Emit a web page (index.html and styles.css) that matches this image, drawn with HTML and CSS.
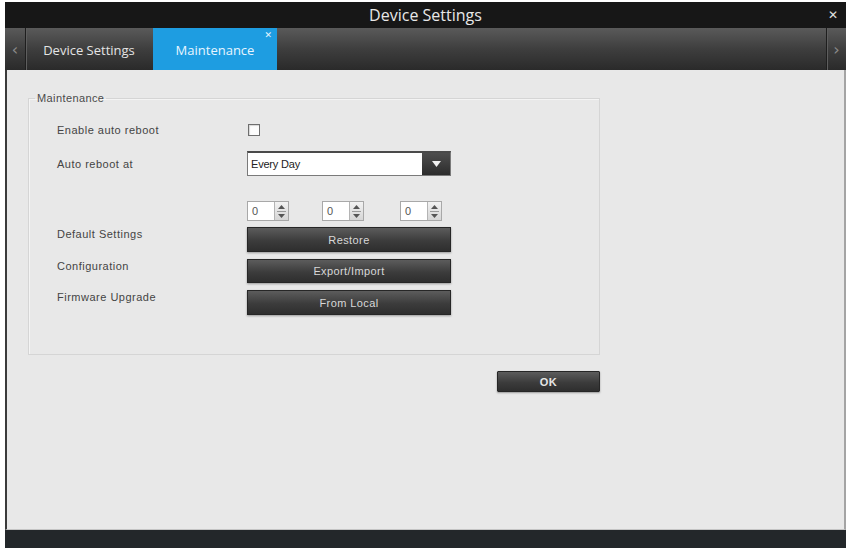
FILE: index.html
```html
<!DOCTYPE html>
<html>
<head>
<meta charset="utf-8">
<title>Device Settings</title>
<link rel="stylesheet" href="styles.css">
</head>
<body>
<div class="window">
  <div class="titlebar">
    <span class="title">Device Settings</span>
    <span class="close">✕</span>
  </div>
  <div class="tabbar">
    <div class="nav nav-left">‹</div>
    <div class="tab">Device Settings</div>
    <div class="tab active">Maintenance<span class="tab-close">✕</span></div>
    <div class="tab-spacer"></div>
    <div class="nav nav-right">›</div>
  </div>
  <div class="content">
    <div class="panel">
      <fieldset class="group">
        <legend>Maintenance</legend>
        <div class="form">
          <div class="row row-check">
            <span class="label">Enable auto reboot</span>
            <span class="checkbox"></span>
          </div>
          <div class="row row-select">
            <span class="label">Auto reboot at</span>
            <div class="select">
              <span class="select-value">Every Day</span>
              <span class="select-arrow"><svg width="9" height="6" viewBox="0 0 9 6"><path d="M0 0H9L4.5 6Z" fill="#f2f2f2"/></svg></span>
            </div>
          </div>
          <div class="row row-spin">
            <span class="label"></span>
            <div class="spinners">
              <div class="spinner s1"><span class="spin-val">0</span><span class="spin-btns"><svg width="7" height="4" viewBox="0 0 7 4"><path d="M3.5 0L7 4H0Z" fill="#555"/></svg><i class="spin-sep"></i><svg width="7" height="4" viewBox="0 0 7 4"><path d="M0 0H7L3.5 4Z" fill="#555"/></svg></span></div>
              <div class="spinner s2"><span class="spin-val">0</span><span class="spin-btns"><svg width="7" height="4" viewBox="0 0 7 4"><path d="M3.5 0L7 4H0Z" fill="#555"/></svg><i class="spin-sep"></i><svg width="7" height="4" viewBox="0 0 7 4"><path d="M0 0H7L3.5 4Z" fill="#555"/></svg></span></div>
              <div class="spinner s3"><span class="spin-val">0</span><span class="spin-btns"><svg width="7" height="4" viewBox="0 0 7 4"><path d="M3.5 0L7 4H0Z" fill="#555"/></svg><i class="spin-sep"></i><svg width="7" height="4" viewBox="0 0 7 4"><path d="M0 0H7L3.5 4Z" fill="#555"/></svg></span></div>
            </div>
          </div>
          <div class="row row-btn r-restore">
            <span class="label top">Default Settings</span>
            <button class="btn h25">Restore</button>
          </div>
          <div class="row row-btn r-export">
            <span class="label top">Configuration</span>
            <button class="btn h24">Export/Import</button>
          </div>
          <div class="row row-btn r-local">
            <span class="label top">Firmware Upgrade</span>
            <button class="btn h25">From Local</button>
          </div>
        </div>
      </fieldset>
      <button class="btn ok">OK</button>
    </div>
  </div>
  <div class="footer"></div>
</div>
</body>
</html>
```

FILE: styles.css
```css
* { box-sizing: border-box; }
html, body { margin: 0; padding: 0; background: #ffffff; }
body { font-family: "Liberation Sans", Arial, sans-serif; }

.window {
  margin: 2px 2px 0 5px;
  height: 546px;
  display: flex;
  flex-direction: column;
}

.titlebar {
  height: 26px;
  flex: none;
  background: #171717;
  display: grid;
  grid-template-columns: 1fr auto 1fr;
  align-items: center;
}
.title {
  grid-column: 2;
  color: #e8e8e8;
  font-family: "Open Sans", "Noto Sans", sans-serif;
  font-size: 16px;
  line-height: 26px;
}
.close {
  grid-column: 3;
  justify-self: end;
  margin-right: 8px;
  color: #e0e0e0;
  font-size: 12px;
  font-weight: bold;
  font-family: "DejaVu Sans", sans-serif;
}

.tabbar {
  height: 42px;
  flex: none;
  display: flex;
  background: linear-gradient(#5a5a5a, #3e3e3e 50%, #2a2a2a);
}
.nav {
  width: 21px;
  display: flex;
  align-items: center;
  justify-content: center;
  color: #8a8a8a;
  font-size: 16px;
  font-family: "DejaVu Sans", sans-serif;
}
.nav-left { border-right: 1px solid #1e1e1e; box-shadow: 1px 0 0 #5e5e5e; }
.nav-right { width: 20px; border-left: 1px solid #1e1e1e; box-shadow: inset 1px 0 0 #5e5e5e; }
.tab {
  width: 126px;
  display: flex;
  align-items: center;
  justify-content: center;
  color: #e4e4e4;
  font-family: "Open Sans", "Noto Sans", sans-serif;
  font-size: 13px;
  padding-top: 1px;
}
.tab.active {
  width: 124px;
  margin-left: 1px;
  background: #1e9de1;
  color: #e8f5ff;
  position: relative;
}
.tab-close {
  position: absolute;
  top: 2px;
  right: 5px;
  font-size: 9px;
  color: #e6f6ff;
  font-family: "DejaVu Sans", sans-serif;
}
.tab-spacer { flex: 1; }

.content {
  flex: 1;
  background: #e8e8e8;
  border-left: 2px solid #3a3a3a;
  border-right: 2px solid #a4a4a4;
  border-bottom: 1px solid #c4c4c4;
  padding: 21px 0 0 21px;
}
.panel {
  width: 572px;
  display: flex;
  flex-direction: column;
}
.group {
  margin: 0;
  border: 1px solid #d5d5d5;
  box-shadow: inset 1px 1px 0 #f4f4f4;
  padding: 17px 0 39px 8px;
  min-width: 0;
}
legend {
  padding: 0 2px;
  margin-left: -2px;
  font-size: 11px;
  line-height: 14px;
  color: #4a4a4a;
  letter-spacing: 0.4px;
}

.form { margin-left: 20px; display: flex; flex-direction: column; }
.row { display: flex; align-items: center; }
.label {
  width: 190px;
  flex: none;
  font-size: 11px;
  line-height: 14px;
  color: #444;
  letter-spacing: 0.5px;
}
.label.top { align-self: flex-start; }

.row-check { height: 16px; }
.row-select { height: 25px; margin-top: 13px; }
.row-spin { height: 20px; margin-top: 25px; }
.r-restore { margin-top: 6px; }
.r-export { margin-top: 7px; }
.r-local { margin-top: 7px; }

.checkbox {
  width: 12px;
  height: 12px;
  margin-left: 1px;
  background: #fcfcfc;
  border: 1px solid #6e6e6e;
  box-shadow: inset 1px 1px 1px rgba(0,0,0,0.15);
}

.select {
  width: 204px;
  height: 25px;
  display: flex;
  border: 1px solid #7a7a7a;
  border-top: 2px solid #4a4a4a;
  background: #fff;
}
.select-value {
  flex: 1;
  font-size: 11px;
  color: #222;
  padding-left: 3px;
  display: flex;
  align-items: center;
  letter-spacing: -0.2px;
}
.select-arrow {
  width: 28px;
  display: flex;
  align-items: center;
  justify-content: center;
  background: linear-gradient(#4e4e4e, #2c2c2c);
}

.spinners { display: flex; }
.spinner {
  width: 42px;
  height: 20px;
  display: flex;
  border: 1px solid #a8a8a8;
  background: #fff;
}
.s2 { margin-left: 33px; }
.s3 { margin-left: 36px; }
.spin-val {
  flex: 1;
  font-size: 11px;
  color: #555;
  padding-left: 4px;
  display: flex;
  align-items: center;
}
.spin-btns {
  width: 14px;
  display: flex;
  flex-direction: column;
  align-items: center;
  justify-content: center;
  gap: 2px;
  background: linear-gradient(#f2f2f2, #d6d6d6);
  border-left: 1px solid #b4b4b4;
}
.spin-sep { display: block; width: 9px; height: 1px; background: #9a9a9a; }

.btn {
  width: 204px;
  border: 1px solid #262626;
  border-radius: 0;
  background: linear-gradient(#5c5c5c, #3c3c3c 55%, #2e2e2e);
  color: #d8d8d8;
  font-family: "Liberation Sans", Arial, sans-serif;
  font-size: 11px;
  letter-spacing: 0.4px;
  padding: 0;
  box-shadow: 0 1px 2px rgba(0,0,0,0.35);
}
.h25 { height: 25px; }
.h24 { height: 24px; }
.ok {
  align-self: flex-end;
  width: 103px;
  height: 21px;
  margin-top: 16px;
  color: #e6e6e6;
  font-weight: bold;
  border-radius: 1px;
}

.footer {
  height: 18px;
  flex: none;
  background: #23272a;
}
```
